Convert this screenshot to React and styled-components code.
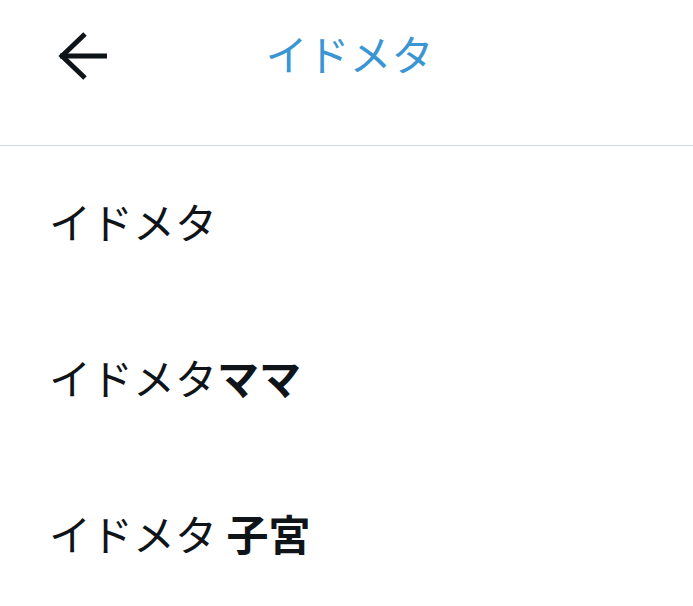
import React from 'react';
import styled, { createGlobalStyle } from 'styled-components';

const GlobalStyle = createGlobalStyle`
  html, body {
    margin: 0;
    padding: 0;
    background: #ffffff;
  }
  body {
    font-family: "Noto Sans CJK JP", "Noto Sans", sans-serif;
    color: #0f1419;
  }
`;

const suggestions = [
  { base: 'イドメタ', bold: '' },
  { base: 'イドメタ', bold: 'ママ' },
  { base: 'イドメタ', bold: ' 子宮' },
];

function BackArrow() {
  return (
    <svg width="52" height="50" viewBox="0 0 52 50" fill="none">
      <path d="M3 24 H50" stroke="#0f1419" strokeWidth="5" />
      <path d="M28 2 L5 24 L28 46" stroke="#0f1419" strokeWidth="5" />
    </svg>
  );
}

export default function App() {
  return (
    <Page>
      <GlobalStyle />
      <Header>
        <Bar>
          <BackButton>
            <BackArrow />
          </BackButton>
          <Title>イドメタ</Title>
          <span />
        </Bar>
      </Header>
      <List>
        {suggestions.map((s, i) => (
          <Row key={i}>
            <RowText>
              {s.base}
              {s.bold && <Strong>{s.bold}</Strong>}
            </RowText>
          </Row>
        ))}
      </List>
    </Page>
  );
}

const Page = styled.div`
  width: 693px;
  min-height: 606px;
  background: #fff;
`;

const Header = styled.header`
  height: 145px;
  border-bottom: 1px solid #cfd9de;
  box-sizing: content-box;
`;

const Bar = styled.div`
  height: 112px;
  display: grid;
  grid-template-columns: 1fr auto 1fr;
  align-items: center;
`;

const BackButton = styled.div`
  display: flex;
  align-items: center;
  padding-left: 57px;
  padding-top: 2px;
`;

const Title = styled.div`
  font-size: 42px;
  line-height: 1;
  color: #3a96d2;
  font-weight: 400;
  padding-left: 6px;
  padding-bottom: 6px;
`;

const List = styled.div`
  display: flex;
  flex-direction: column;
`;

const Row = styled.div`
  height: 156px;
  display: flex;
  align-items: center;
  padding-left: 49px;
  padding-bottom: 6px;
  box-sizing: border-box;
`;

const RowText = styled.div`
  font-size: 42px;
  line-height: 1;
  color: #0f1419;
  white-space: pre;
`;

const Strong = styled.span`
  font-weight: 700;
`;
